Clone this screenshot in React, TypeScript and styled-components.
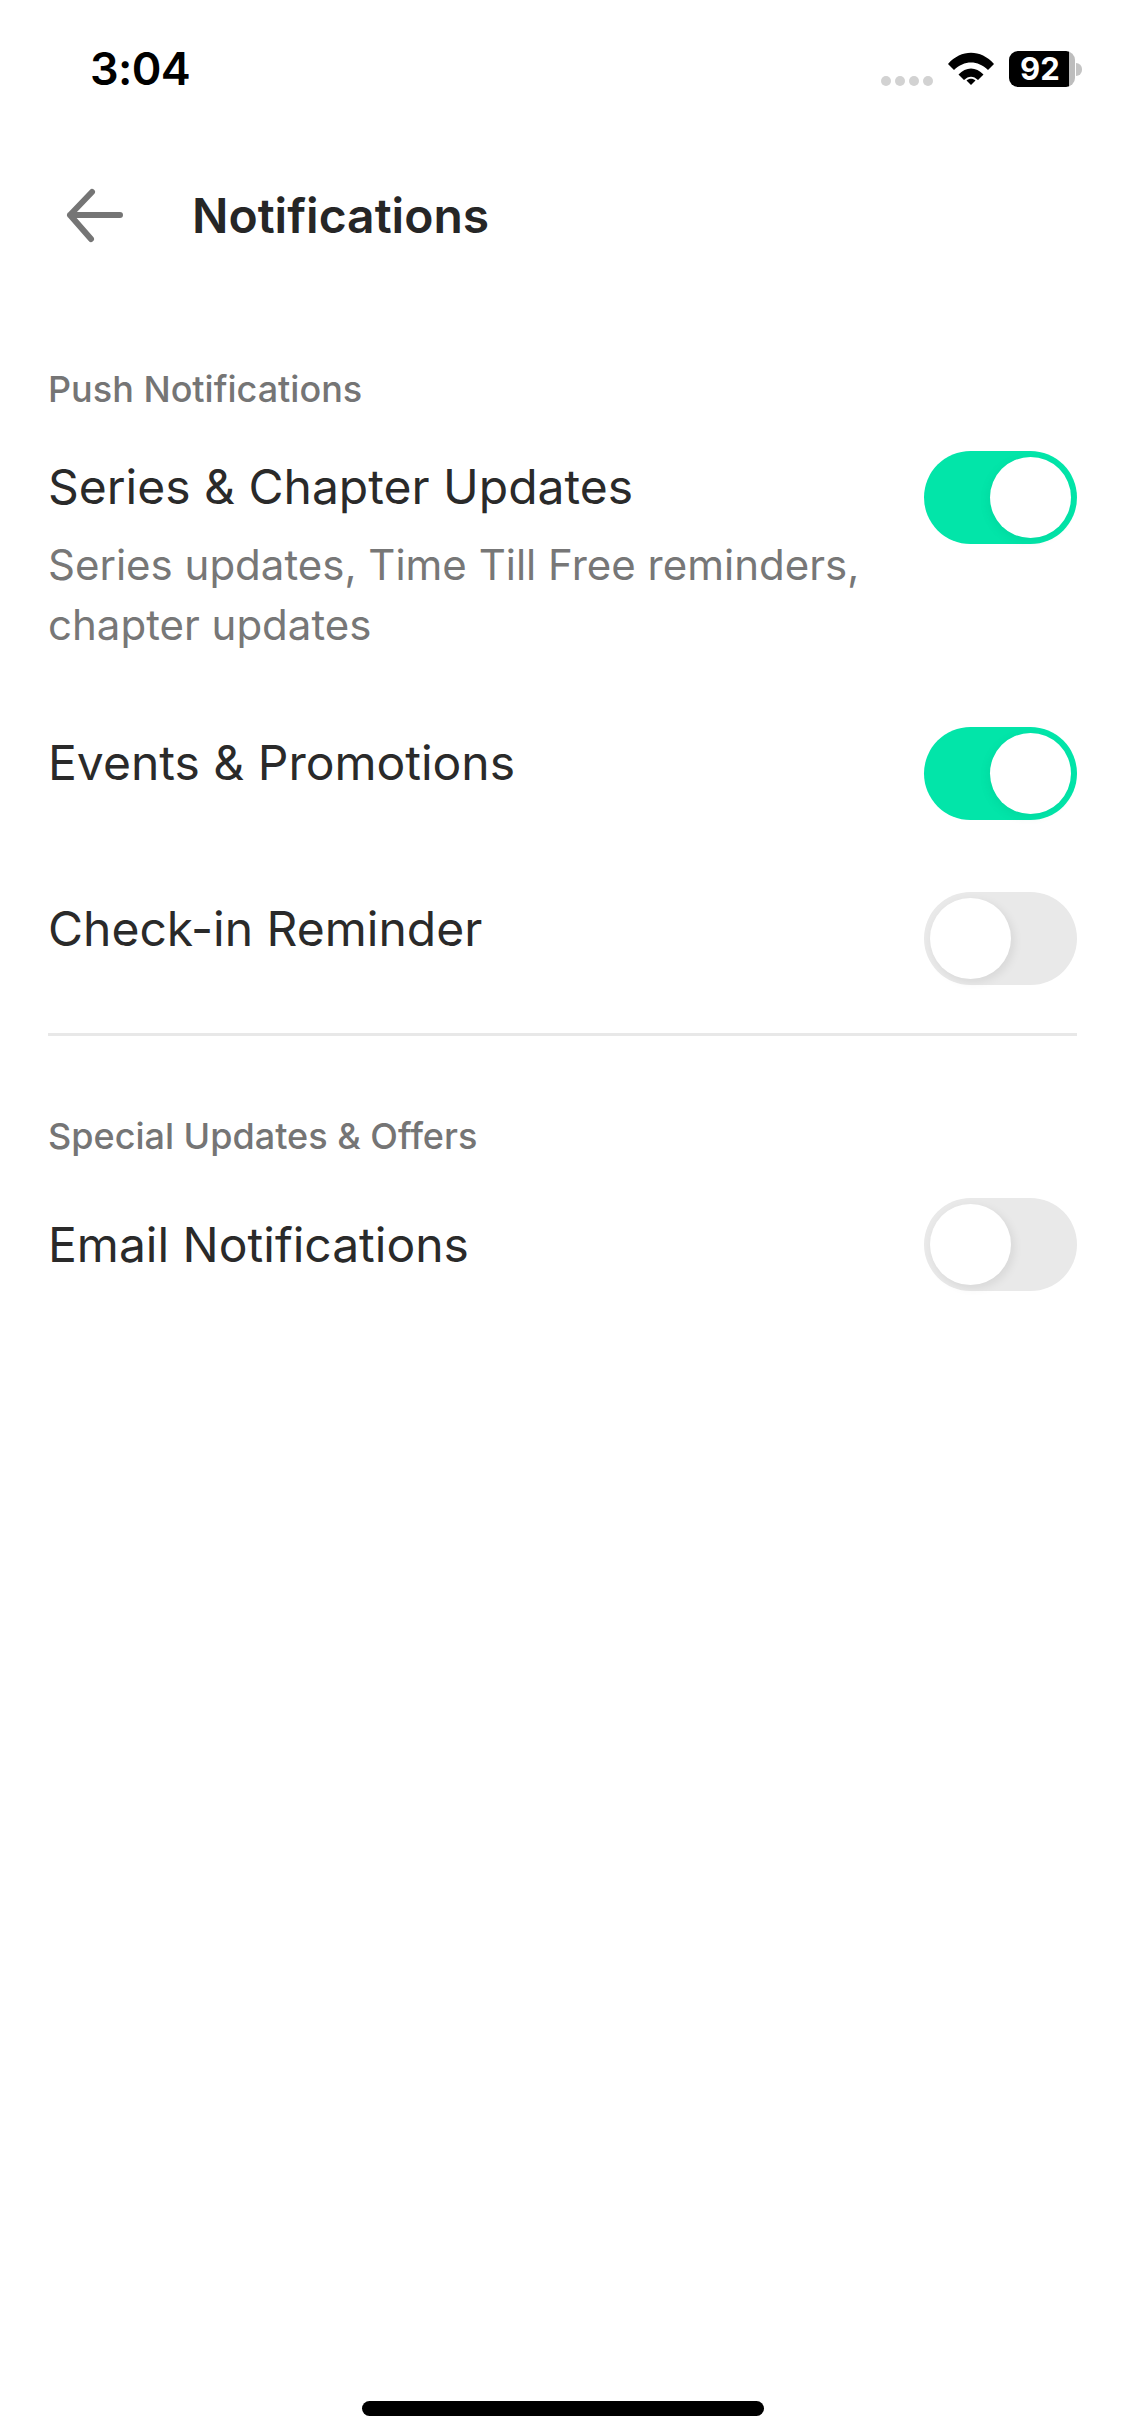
import React from 'react';
import styled, { createGlobalStyle } from 'styled-components';

const GlobalStyle = createGlobalStyle`
  html, body {
    margin: 0;
    padding: 0;
    background: #fff;
  }
  body {
    font-family: Inter, "Liberation Sans", sans-serif;
  }
`;

const Page = styled.div`
  position: relative;
  width: 1125px;
  height: 2436px;
  overflow: hidden;
  background: #fff;
  display: flex;
  flex-direction: column;
`;

const StatusBar = styled.div`
  height: 170px;
  box-sizing: border-box;
  padding: 46px 50px 0 90px;
  display: flex;
  align-items: flex-start;
  justify-content: space-between;
`;

const Clock = styled.div`
  font-size: 45px;
  line-height: 46px;
  font-weight: 600;
  letter-spacing: -0.6px;
  color: #000;
`;

const StatusIcons = styled.div`
  display: flex;
  align-items: flex-start;
  padding-top: 5px;
`;

const SignalDots = styled.div`
  display: flex;
  gap: 4px;
  margin-top: 25px;
  margin-right: 15px;
`;

const Dot = styled.span`
  width: 10px;
  height: 10px;
  border-radius: 50%;
  background: #d2d2d2;
`;

const WifiIcon = styled.svg`
  width: 46px;
  height: 33px;
  margin-top: 1px;
  margin-right: 15px;
`;

const Battery = styled.div`
  position: relative;
  width: 66px;
  height: 36px;
  border-radius: 9px;
  background: linear-gradient(90deg, #000 0 60px, #bdbdbd 60px);
  color: #fff;
  font-size: 31px;
  line-height: 36px;
  font-weight: 700;
  padding-left: 11px;
  box-sizing: border-box;
`;

const BatteryCap = styled.span`
  position: absolute;
  right: -7px;
  top: 12px;
  width: 6px;
  height: 13px;
  border-radius: 0 7px 7px 0;
  background: #c4c4c4;
`;

const Header = styled.div`
  height: 90px;
  display: flex;
  align-items: center;
  padding-left: 65px;
`;

const BackIcon = styled.svg`
  width: 60px;
  height: 58px;
  margin-right: 67px;
  flex: none;
`;

const Title = styled.h1`
  margin: 0;
  font-size: 48px;
  font-weight: 600;
  color: #262626;
`;

const Content = styled.div`
  padding: 0 48px;
  margin-top: 107px;
`;

const SectionLabel = styled.div<{ $top?: number }>`
  font-size: 36px;
  line-height: 44px;
  font-weight: 500;
  color: #757575;
  margin-top: ${p => p.$top ?? 0}px;
`;

const Row = styled.div<{ $top: number }>`
  display: flex;
  justify-content: space-between;
  align-items: flex-start;
  margin-top: ${p => p.$top}px;
`;

const RowText = styled.div<{ $offset?: number }>`
  width: 840px;
  margin-top: ${p => p.$offset ?? 0}px;
`;

const RowTitle = styled.div`
  font-size: 48px;
  line-height: 60px;
  color: #2a2a2a;
`;

const RowHint = styled.div`
  font-size: 42px;
  line-height: 60px;
  color: #777;
  margin-top: 18px;
`;

const Toggle = styled.div<{ $on: boolean }>`
  position: relative;
  width: 153px;
  height: 93px;
  border-radius: 47px;
  flex: none;
  background: ${p => (p.$on ? '#02e5a9' : '#e9e9e9')};
`;

const Knob = styled.span<{ $on: boolean }>`
  position: absolute;
  top: 6px;
  left: ${p => (p.$on ? '66px' : '6px')};
  width: 81px;
  height: 81px;
  border-radius: 50%;
  background: #fff;
  box-shadow: ${p => (p.$on ? '-2px 3px 8px rgba(0,140,100,.12)' : '3px 3px 10px rgba(0,0,0,.08)')};
`;

const Divider = styled.div`
  height: 3px;
  background: #e8e8e8;
  margin-top: 48px;
`;

const HomeBar = styled.div`
  position: absolute;
  left: 362px;
  bottom: 20px;
  width: 402px;
  height: 15px;
  border-radius: 8px;
  background: #000;
`;

const Switch: React.FC<{ on?: boolean }> = ({ on = false }) => (
  <Toggle $on={on}>
    <Knob $on={on} />
  </Toggle>
);

const App: React.FC = () => (
  <Page>
    <GlobalStyle />
    <StatusBar>
      <Clock>3:04</Clock>
      <StatusIcons>
        <SignalDots>
          <Dot /><Dot /><Dot /><Dot />
        </SignalDots>
        <WifiIcon viewBox="0 0 46 33">
          <path d="M0 12C13 -3 33 -3 46 12L40 18C30 8 16 8 6 18Z" fill="#000" />
          <path d="M10.500 22.500C18 14.500 28 14.500 35.500 22.500L30 28C25.500 23.500 20.500 23.500 16 28Z" fill="#000" />
          <path d="M18.500 28.500C21 26 25 26 27.500 28.500L23 33Z" fill="#000" />
        </WifiIcon>
        <Battery>
          92
          <BatteryCap />
        </Battery>
      </StatusIcons>
    </StatusBar>
    <Header>
      <BackIcon viewBox="0 0 60 58" fill="none" stroke="#757575" strokeWidth="6" strokeLinecap="round" strokeLinejoin="round">
        <path d="M55 29H5M27 6 5 29 26 53" />
      </BackIcon>
      <Title>Notifications</Title>
    </Header>
    <Content>
      <SectionLabel>Push Notifications</SectionLabel>
      <Row $top={40}>
        <RowText $offset={6}>
          <RowTitle>Series &amp; Chapter Updates</RowTitle>
          <RowHint>Series updates, Time Till Free reminders, chapter updates</RowHint>
        </RowText>
        <Switch on />
      </Row>
      <Row $top={72}>
        <RowText $offset={6}>
          <RowTitle>Events &amp; Promotions</RowTitle>
        </RowText>
        <Switch on />
      </Row>
      <Row $top={72}>
        <RowText $offset={7}>
          <RowTitle>Check-in Reminder</RowTitle>
        </RowText>
        <Switch />
      </Row>
      <Divider />
      <SectionLabel $top={78}>Special Updates &amp; Offers</SectionLabel>
      <Row $top={40}>
        <RowText $offset={17}>
          <RowTitle>Email Notifications</RowTitle>
        </RowText>
        <Switch />
      </Row>
    </Content>
    <HomeBar />
  </Page>
);

export default App;
